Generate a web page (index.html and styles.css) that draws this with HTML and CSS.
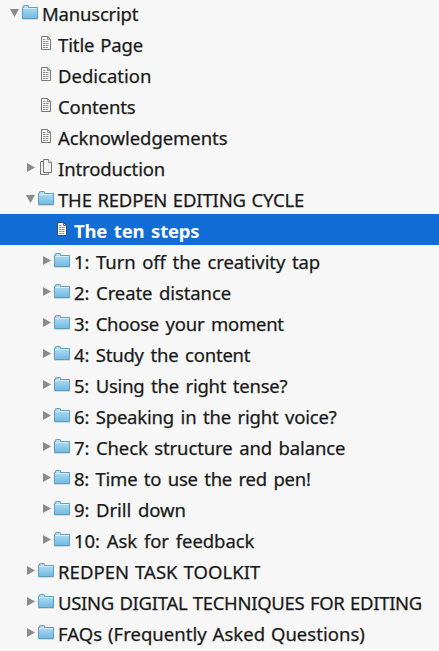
FILE: index.html
```
<!DOCTYPE html>
<html lang="en">
<head>
    <meta charset="UTF-8">
    <meta name="viewport" content="width=device-width, initial-scale=1.0">
    <title>Manuscript</title>
    <link rel="stylesheet" href="styles.css">
</head>
<body>
    <!-- Icons shared by the rows -->
    <svg class="icon-defs">
        <defs>
            <linearGradient id="folderFill" x1="0" y1="0" x2="0" y2="1">
                <stop offset="0" stop-color="#b9e1f6"/>
                <stop offset="1" stop-color="#71b9e2"/>
            </linearGradient>
            <symbol id="folder" viewBox="0 0 16 15">
                <path d="M0.5 13.5V2.5H1.5V1.2Q1.5 0.5 2.2 0.5H5.8Q6.5 0.5 6.5 1.2V2.5H15.5V13.5Z" fill="url(#folderFill)" stroke="#5d9dbf"/>
                <path d="M1 3.5H15" stroke="#d2eefb"/>
                <path d="M0 14.5H16" stroke="#d3dade"/>
            </symbol>
            <symbol id="doc" viewBox="0 0 10 14">
                <path d="M0.5 0.5H6.5L9.5 3.5V13.5H0.5Z" fill="#fcfcfc" stroke="currentColor"/>
                <path d="M6.5 0.5V3.5H9.5" fill="none" stroke="currentColor" stroke-width="0.8"/>
                <path d="M2 3.5H5M2 5.5H8M2 7.5H8M2 9.5H8M2 11.5H7" stroke="#8c8c8c" stroke-dasharray="2.5 0.5"/>
            </symbol>
            <symbol id="stack" viewBox="0 0 12 16">
                <path d="M3 2.5H0.5V15.5H8.5V14" fill="#eee" stroke="#777"/>
                <path d="M3.5 0.5H8.5L11.5 3.5V13.5H3.5Z" fill="#f1f1f1" stroke="#777"/>
                <path d="M8.5 0.5V3.5H11.5" fill="#fff" stroke="#777" stroke-width="0.8"/>
            </symbol>
        </defs>
    </svg>

    <ul class="binder" id="binder"></ul>

    <script>
        const items = [
            { name: "Manuscript", level: 0, icon: "folder", arrow: "open", spacing: -0.2 },
            { name: "Title Page", level: 1, icon: "doc", spacing: -0.1 },
            { name: "Dedication", level: 1, icon: "doc", spacing: 0 },
            { name: "Contents", level: 1, icon: "doc", spacing: -0.1 },
            { name: "Acknowledgements", level: 1, icon: "doc", spacing: -0.06 },
            { name: "Introduction", level: 1, icon: "stack", arrow: "closed", spacing: -0.12 },
            { name: "THE REDPEN EDITING CYCLE", level: 1, icon: "folder", arrow: "open", spacing: -0.17 },
            { name: "The ten steps", level: 2, icon: "doc", selected: true, spacing: -0.18 },
            { name: "1: Turn off the creativity tap", level: 2, icon: "folder", arrow: "closed", spacing: -0.1 },
            { name: "2: Create distance", level: 2, icon: "folder", arrow: "closed", spacing: -0.1 },
            { name: "3: Choose your moment", level: 2, icon: "folder", arrow: "closed", spacing: -0.24 },
            { name: "4: Study the content", level: 2, icon: "folder", arrow: "closed", spacing: -0.2 },
            { name: "5: Using the right tense?", level: 2, icon: "folder", arrow: "closed", spacing: -0.23 },
            { name: "6: Speaking in the right voice?", level: 2, icon: "folder", arrow: "closed", spacing: -0.2 },
            { name: "7: Check structure and balance", level: 2, icon: "folder", arrow: "closed", spacing: -0.13 },
            { name: "8: Time to use the red pen!", level: 2, icon: "folder", arrow: "closed", spacing: -0.26 },
            { name: "9: Drill down", level: 2, icon: "folder", arrow: "closed", spacing: -0.08 },
            { name: "10: Ask for feedback", level: 2, icon: "folder", arrow: "closed", spacing: -0.05 },
            { name: "REDPEN TASK TOOLKIT", level: 1, icon: "folder", arrow: "closed", spacing: 0.05 },
            { name: "USING DIGITAL TECHNIQUES FOR EDITING", level: 1, icon: "folder", arrow: "closed", spacing: -0.31 },
            { name: "FAQs (Frequently Asked Questions)", level: 1, icon: "folder", arrow: "closed", spacing: 0.03 }
        ];

        const binder = document.getElementById('binder');
        items.forEach(item => {
            const row = document.createElement('li');
            row.className = `row level-${item.level} ${item.selected ? 'selected' : ''}`;
            row.innerHTML = `
                <span class="arrow ${item.arrow || ''}"></span>
                <span class="icon"><svg class="${item.icon}"><use href="#${item.icon}"/></svg></span>
                <span class="name" style="letter-spacing: ${item.spacing}px">${item.name}</span>
            `;
            binder.appendChild(row);
        });
    </script>
</body>
</html>
```
FILE: styles.css
```
body {
    margin: 0;
    height: 651px;
    overflow: hidden;
    background-color: #f7f7f7;
    font-family: "Noto Sans", sans-serif;
    font-size: 18.5px;
    color: #1a1a1a;
}
.icon-defs {
    display: block;
    width: 0;
    height: 0;
}
.binder {
    list-style-type: none;
    margin: -3px 0 0;
    padding: 0;
}
.row {
    display: flex;
    height: 31px;
    line-height: 31px;
    white-space: nowrap;
}
.level-0 {
    padding-left: 10px;
}
.level-1 {
    padding-left: 26px;
    word-spacing: 1px;
}
.level-2 {
    padding-left: 42px;
    word-spacing: 2px;
}
.arrow {
    width: 12px;
    flex-shrink: 0;
}
.arrow::before {
    display: block;
    width: 8px;
    height: 9px;
    margin: 11px 0 0 1px;
    background-color: #8b8b8b;
}
.arrow.open::before {
    content: "";
    width: 9px;
    height: 8px;
    margin: 12px 0 0;
    clip-path: polygon(0 0, 100% 0, 50% 100%);
}
.arrow.closed::before {
    content: "";
    clip-path: polygon(0 0, 100% 50%, 0 100%);
}
.icon {
    width: 20px;
    flex-shrink: 0;
}
.icon svg {
    display: block;
}
.folder {
    width: 16px;
    height: 15px;
    margin-top: 8px;
}
.doc {
    width: 10px;
    height: 14px;
    margin: 8px 0 0 3px;
    color: #777;
}
.stack {
    width: 12px;
    height: 16px;
    margin: 7px 0 0 2px;
}
.name {
    padding-top: 1px;
    -webkit-text-stroke: 0.25px;
}
.selected {
    background-color: #116cd6;
    color: #fff;
    font-weight: bold;
}
.selected .name {
    -webkit-text-stroke: 0;
}
.selected .doc {
    color: #2c4a75;
}
```
